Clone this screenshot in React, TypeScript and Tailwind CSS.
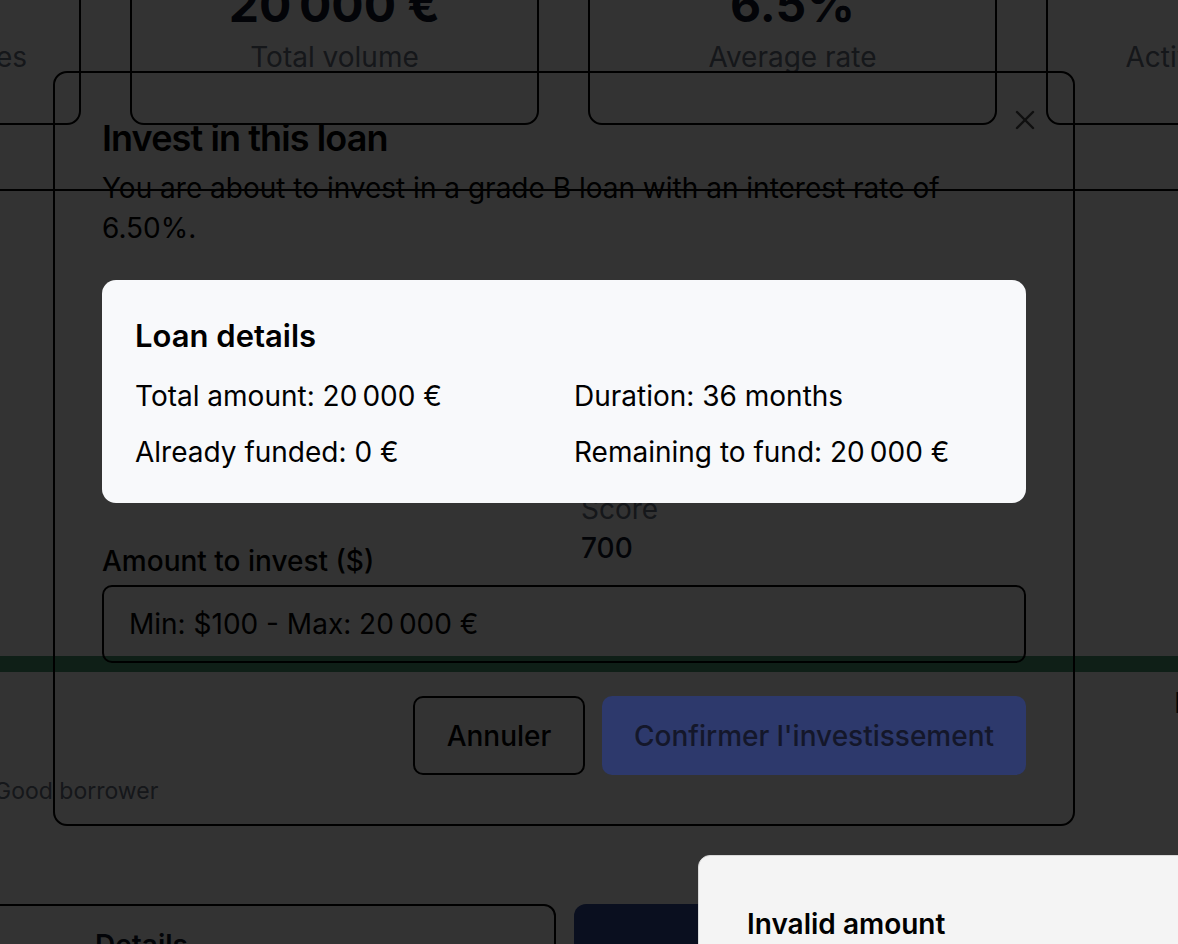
import { X } from "lucide-react";

const stats = [
  { value: "48", label: "Available opportunities" },
  { value: "20\u202F000\u00A0€", label: "Total volume" },
  { value: "6.5%", label: "Average rate" },
  { value: "1", label: "Active investments" },
];

function BackgroundPage() {
  return (
    <div className="flex flex-col">
      {/* stats row, scrolled */}
      <div className="-mt-[60px] -ml-[328px] flex gap-[49px]">
        {stats.map((s) => (
          <div
            key={s.label}
            className="flex h-[185px] w-[409px] shrink-0 flex-col items-center rounded-[14px] border-2 border-black pt-[35px]"
          >
            <div className="text-[48px] font-bold leading-[56px] text-gray-900">{s.value}</div>
            <div className="mt-[6px] whitespace-nowrap text-[28px] leading-[36px] text-gray-500">{s.label}</div>
          </div>
        ))}
      </div>

      <div className="h-[66px] border-b-2 border-black" />

      <div className="mt-[300px] ml-[581px] flex flex-col">
        <span className="text-[28px] leading-[36px] text-gray-500">Score</span>
        <span className="mt-[3px] text-[28px] font-medium leading-[36px] text-gray-900">700</span>
      </div>

      <div className="mt-[90px] h-[16px] w-full bg-[#4b9c74]" />

      <div className="mt-[13px] whitespace-nowrap pl-[1174px] text-[28px] leading-[36px] text-gray-900">Rate</div>

      <div className="mt-[52px] -ml-[6px] whitespace-nowrap text-[23px] leading-[36px] text-gray-500">Good borrower</div>

      <div className="mt-[95px] flex gap-[18px]">
        <div className="-ml-[20px] h-[80px] w-[576px] rounded-[12px] border-2 border-black pl-[113px] pt-[18px] text-[28px] font-semibold text-gray-900">
          Details
        </div>
        <div className="h-[80px] w-[400px] rounded-[12px] bg-[#324c9c]" />
      </div>
    </div>
  );
}

function InvestDialog() {
  return (
    <div className="absolute left-[53px] top-[71px] h-[755px] w-[1022px] rounded-[14px] border-2 border-black px-[47px] pt-[45px]">
      <button className="absolute right-[32px] top-[31px] text-black opacity-70">
        <X size={32} strokeWidth={1.8} />
      </button>

      <h2 className="text-[36px] font-semibold leading-[40px] tracking-tight text-black">Invest in this loan</h2>
      <p className="mt-[10px] text-[28px] leading-[40px] text-black">
        You are about to invest in a grade B loan with an interest rate of 6.50%.
      </p>

      <div className="mt-[32px] rounded-[14px] bg-[#f8f9fb] px-[33px] pt-[36px] pb-[31px] text-black">
        <h3 className="text-[31px] font-semibold leading-[40px]">Loan details</h3>
        <div className="mt-[20px] grid grid-cols-2 gap-x-[20px] gap-y-[16px] text-[28px] leading-[40px]">
          <span>Total amount: 20{"\u202F"}000{"\u00A0"}€</span>
          <span>Duration: 36 months</span>
          <span>Already funded: 0{"\u00A0"}€</span>
          <span>Remaining to fund: 20{"\u202F"}000{"\u00A0"}€</span>
        </div>
      </div>

      <label className="mt-[38px] block text-[28px] font-medium leading-[40px] text-black">Amount to invest ($)</label>
      <div className="mt-[4px] flex h-[78px] items-center rounded-[10px] border-2 border-black px-[25px] text-[28px] text-black">
        Min: $100 - Max: 20{"\u202F"}000{"\u00A0"}€
      </div>

      <div className="mt-[33px] flex justify-end gap-[17px]">
        <button className="h-[79px] w-[172px] rounded-[10px] border-2 border-black text-[28px] font-medium text-black">
          Annuler
        </button>
        <button className="h-[79px] w-[424px] rounded-[10px] bg-[#2d396c] text-[28px] font-medium text-[#14172a]">
          Confirmer l'investissement
        </button>
      </div>
    </div>
  );
}

export default function App() {
  return (
    <div className="relative h-[944px] w-[1178px] overflow-hidden bg-white font-['Inter',sans-serif]">
      <BackgroundPage />
      <div className="absolute inset-0 bg-black/80" />
      <InvestDialog />
      <div className="absolute left-[698px] top-[855px] h-[200px] w-[520px] rounded-[12px] border border-[#d9d9d9] bg-[#f4f4f4] pl-[48px] pt-[50px]">
        <div className="text-[28px] font-semibold leading-[36px] text-black">Invalid amount</div>
      </div>
    </div>
  );
}
